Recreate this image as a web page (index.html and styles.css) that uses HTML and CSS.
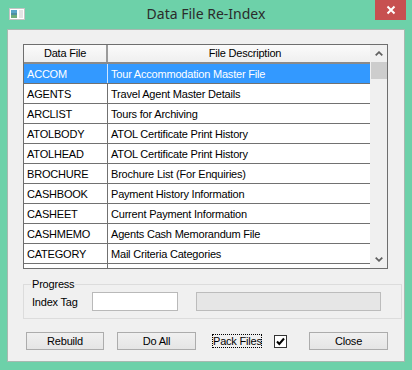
FILE: index.html
```html
<!DOCTYPE html>
<html>
<head>
<meta charset="utf-8">
<link rel="stylesheet" href="styles.css">
</head>
<body>
<div class="window">
  <div class="titlebar">
    <svg class="appicon" width="16" height="12" viewBox="0 0 16 12">
      <rect x="0.5" y="0.5" width="15" height="11" fill="#ffffff" stroke="#c4c4c4"/>
      <rect x="2" y="2" width="6" height="8" fill="#4f8fa0"/>
      <rect x="2" y="2" width="6" height="3" fill="#5aa6c8"/>
      <rect x="2" y="7" width="6" height="3" fill="#6fae7a"/>
      <rect x="10" y="2" width="4" height="8" fill="#e4e4e4"/>
    </svg>
    <div class="title">Data File Re-Index</div>
    <div class="closebtn">
      <svg width="10" height="10" viewBox="0 0 10 10">
        <path d="M1.5 1.5 L8.5 8.5 M8.5 1.5 L1.5 8.5" stroke="#ffffff" stroke-width="2"/>
      </svg>
    </div>
  </div>
  <div class="client">
    <div class="listview">
      <div class="lv-content">
        <div class="lv-header">
          <div class="hcell c1">Data File</div>
          <div class="hcell c2">File Description</div>
        </div>
        <div class="row selected"><div class="cell c1">ACCOM</div><div class="cell c2">Tour Accommodation Master File</div></div>
        <div class="row"><div class="cell c1">AGENTS</div><div class="cell c2">Travel Agent Master Details</div></div>
        <div class="row"><div class="cell c1">ARCLIST</div><div class="cell c2">Tours for Archiving</div></div>
        <div class="row"><div class="cell c1">ATOLBODY</div><div class="cell c2">ATOL Certificate Print History</div></div>
        <div class="row"><div class="cell c1">ATOLHEAD</div><div class="cell c2">ATOL Certificate Print History</div></div>
        <div class="row"><div class="cell c1">BROCHURE</div><div class="cell c2">Brochure List (For Enquiries)</div></div>
        <div class="row"><div class="cell c1">CASHBOOK</div><div class="cell c2">Payment History Information</div></div>
        <div class="row"><div class="cell c1">CASHEET</div><div class="cell c2">Current Payment Information</div></div>
        <div class="row"><div class="cell c1">CASHMEMO</div><div class="cell c2">Agents Cash Memorandum File</div></div>
        <div class="row"><div class="cell c1">CATEGORY</div><div class="cell c2">Mail Criteria Categories</div></div>
        <div class="row"><div class="cell c1"></div><div class="cell c2"></div></div>
      </div>
      <div class="scrollbar">
        <div class="sb-btn">
          <svg width="8" height="5" viewBox="0 0 8 5"><path d="M0.7 4.3 L4 1.2 L7.3 4.3" fill="none" stroke="#606060" stroke-width="1.8"/></svg>
        </div>
        <div class="sb-track"><div class="sb-thumb"></div></div>
        <div class="sb-btn">
          <svg width="8" height="5" viewBox="0 0 8 5"><path d="M0.7 0.7 L4 3.8 L7.3 0.7" fill="none" stroke="#606060" stroke-width="1.8"/></svg>
        </div>
      </div>
    </div>

    <fieldset class="group">
      <legend>Progress</legend>
      <div class="group-row">
        <div class="label">Index Tag</div>
        <div class="textbox"></div>
        <div class="progress"></div>
      </div>
    </fieldset>

    <div class="buttons">
      <div class="btn btn-rebuild">Rebuild</div>
      <div class="btn btn-doall">Do All</div>
      <div class="packlabel">Pack Files</div>
      <div class="checkbox">
        <svg width="11" height="11" viewBox="0 0 11 11"><path d="M2 5.5 L4.3 8 L9 2.5" fill="none" stroke="#000000" stroke-width="2"/></svg>
      </div>
      <div class="btn btn-close">Close</div>
    </div>
  </div>
</div>
</body>
</html>
```

FILE: styles.css
```css
html, body {
  margin: 0;
  padding: 0;
}
body {
  width: 412px;
  height: 370px;
  background: #6dd1a9;
  overflow: hidden;
  font-family: "Liberation Sans", Arial, sans-serif;
  font-size: 11px;
  letter-spacing: -0.2px;
  color: #000;
}
.window {
  display: flex;
  flex-direction: column;
  height: 370px;
}
.titlebar {
  height: 29px;
  display: grid;
  grid-template-columns: 1fr auto 1fr;
  align-items: start;
}
.appicon {
  justify-self: start;
  margin: 8px 0 0 9px;
}
.title {
  font-family: "Noto Sans", "Open Sans", sans-serif;
  font-size: 14px;
  letter-spacing: 0;
  color: #2b2b2b;
  line-height: 20px;
  padding-top: 4px;
}
.closebtn {
  justify-self: end;
  margin-right: 6px;
  width: 31px;
  height: 20px;
  background: #c75050;
  display: flex;
  align-items: center;
  justify-content: center;
}
.client {
  margin: 0 7px 8px 7px;
  flex: 1;
  background: #f0f0f0;
  border: 1px solid #a7b9b0;
  display: flex;
  flex-direction: column;
}
.listview {
  margin: 14px 0 0 15px;
  width: 363px;
  height: 223px;
  border: 1px solid #6e6e6e;
  background: #fff;
  display: flex;
}
.lv-content {
  width: 346px;
  overflow: hidden;
}
.lv-header {
  display: flex;
  height: 17px;
  border-bottom: 2px solid #8a8a8a;
  background: linear-gradient(#fbfbfb, #efefef);
}
.hcell {
  line-height: 17px;
  text-align: center;
}
.hcell.c1 {
  width: 82px;
  border-right: 2px solid #9a9a9a;
}
.hcell.c2 {
  flex: 1;
  padding-left: 12px;
}
.row {
  display: flex;
  height: 19px;
  border-bottom: 1px solid #717171;
}
.cell {
  padding: 2px 0 0 3px;
  line-height: 17px;
  white-space: nowrap;
  overflow: hidden;
}
.cell.c1 {
  width: 80px;
  border-right: 1px solid #717171;
}
.cell.c2 {
  flex: 1;
}
.row.selected {
  background: #3399ff;
  color: #fff;
}
.row.selected .cell.c1 {
  border-right-color: #cfe6ff;
}
.scrollbar {
  width: 17px;
  background: #f0f0f0;
  display: flex;
  flex-direction: column;
}
.sb-btn {
  height: 17px;
  display: flex;
  align-items: center;
  justify-content: center;
}
.sb-track {
  flex: 1;
}
.sb-thumb {
  height: 17px;
  margin-left: 1px;
  background: #cdcdcd;
}
.group {
  margin: 8px 0 0 15px;
  width: 363px;
  padding: 0 6px 7px 8px;
  border: 1px solid #dcdcdc;
  box-sizing: content-box;
  min-width: 0;
}
.group legend {
  padding: 0 1px;
  margin-left: -1px;
  line-height: 14px;
}
.group-row {
  display: flex;
  align-items: center;
  margin-top: 1px;
}
.label {
  width: 60px;
}
.textbox {
  width: 84px;
  height: 17px;
  background: #fff;
  border: 1px solid #b9b9b9;
}
.progress {
  margin-left: 18px;
  width: 183px;
  height: 17px;
  background: #e6e6e6;
  border: 1px solid #bcbcbc;
}
.buttons {
  display: flex;
  align-items: center;
  margin: 13px 0 0 18px;
}
.btn {
  height: 16px;
  line-height: 16px;
  border: 1px solid #acacac;
  background: linear-gradient(#f0f0f0, #e5e5e5);
  text-align: center;
}
.btn-rebuild {
  width: 76px;
}
.btn-doall {
  width: 77px;
  margin-left: 13px;
}
.packlabel {
  margin-left: 16px;
  width: 48px;
  height: 12px;
  line-height: 12px;
  border: 1px dotted #000;
  text-align: center;
  white-space: nowrap;
}
.checkbox {
  margin-left: 12px;
  width: 11px;
  height: 11px;
  border: 1px solid #333;
  background: #fff;
  display: flex;
  align-items: center;
  justify-content: center;
}
.btn-close {
  margin-left: 22px;
  width: 77px;
}
```
